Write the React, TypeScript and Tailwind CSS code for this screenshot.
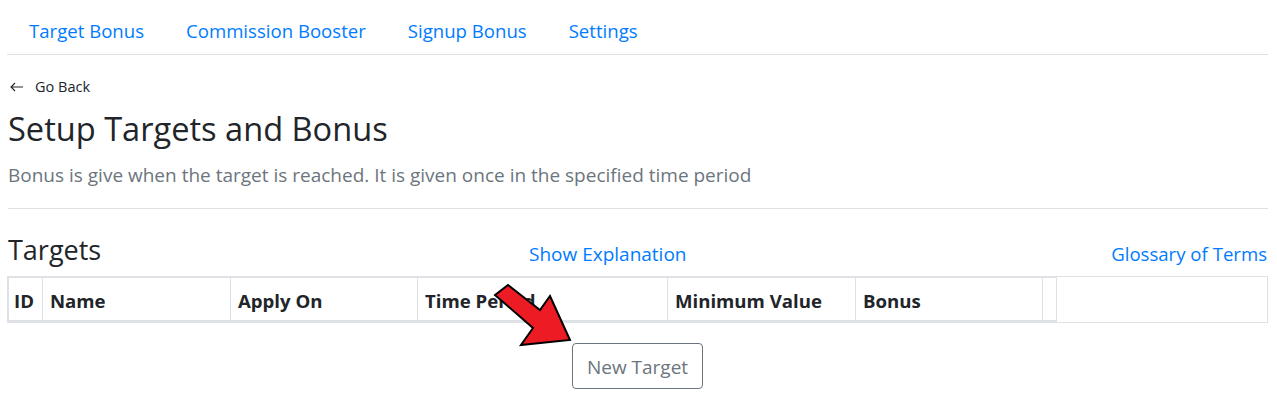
import React from "react";

const links = ["Target Bonus", "Commission Booster", "Signup Bonus", "Settings"];
const cols: { label: string; w: string; pad: string }[] = [
  { label: "ID", w: "w-[34px]", pad: "pl-[5px]" },
  { label: "Name", w: "w-[188px]", pad: "pl-[7px]" },
  { label: "Apply On", w: "w-[187px]", pad: "pl-[7px]" },
  { label: "Time Period", w: "w-[250px]", pad: "pl-[7px]" },
  { label: "Minimum Value", w: "w-[188px]", pad: "pl-[7px]" },
  { label: "Bonus", w: "w-[187px]", pad: "pl-[7px]" },
  { label: "", w: "w-[14px]", pad: "" },
];

export default function App() {
  return (
    <div className="relative w-[1277px] h-[401px] overflow-hidden bg-white pl-[7px] pr-[9px] font-['Open_Sans',sans-serif] text-[#212529]">
      <nav className="flex h-[55px] items-center border-b border-[#dee2e6] pt-[7px]">
        {links.map((l, i) => (
          <a
            key={l}
            className={`px-[21px] text-[18.6px] leading-[24px] text-[#007bff] ${i === 0 ? "ml-[1px]" : ""}`}
          >
            {l}
          </a>
        ))}
      </nav>

      <div className="mt-[21px] flex h-[22px] items-center">
        <svg width="14" height="10" viewBox="0 0 14 10" className="ml-[3px]">
          <path d="M1 5 H13 M5 1 L1 5 L5 9" fill="none" stroke="#212529" strokeWidth="1.1" />
        </svg>
        <span className="ml-[11px] text-[14.5px] leading-[22px]">Go Back</span>
      </div>

      <h1 className="mt-[11px] h-[40px] pl-[1px] text-[32.6px] leading-[40px] font-normal">
        Setup Targets and Bonus
      </h1>

      <p className="mt-[12px] h-[28px] pl-[1px] text-[19px] leading-[28px] text-[#6c757d]">
        Bonus is give when the target is reached. It is given once in the specified time period
      </p>

      <div className="mt-[19px] ml-[1px] border-t border-[#dee2e6]" />

      <div className="mt-[24px] flex items-end">
        <div className="w-[522px] h-[34px] pl-[1px] text-[27px] leading-[34px]">Targets</div>
        <a className="h-[26px] text-[19px] leading-[26px] text-[#007bff]">Show Explanation</a>
        <div className="flex-1" />
        <a className="h-[26px] pr-[1px] text-[18.6px] leading-[26px] text-[#007bff]">Glossary of Terms</a>
      </div>

      <div className="mt-[9px] border border-[#dee2e6]">
        <table className="w-[1049px] table-fixed border-collapse border border-[#dee2e6]">
          <thead>
            <tr className="h-[43px]">
              {cols.map((c, i) => (
                <th
                  key={i}
                  className={`${c.w} ${c.pad} border border-b-2 border-[#dee2e6] pt-[4px] text-left text-[18.6px] font-bold leading-[24px] whitespace-nowrap overflow-hidden`}
                >
                  {c.label}
                </th>
              ))}
            </tr>
          </thead>
        </table>
      </div>

      <div className="mt-[20px] flex justify-center">
        <button className="h-[46px] w-[131px] rounded-[4px] border border-[#6c757d] bg-white pt-[4px] text-[19px] text-[#6c757d]">
          New Target
        </button>
      </div>

      <svg className="pointer-events-none absolute left-0 top-0" width="1277" height="401">
        <polygon
          points="508,285 540,310 550,296 570,340 521,345 533,328 495,295"
          fill="#ed1c24"
          stroke="#000"
          strokeWidth="2"
          strokeLinejoin="miter"
        />
      </svg>
    </div>
  );
}
